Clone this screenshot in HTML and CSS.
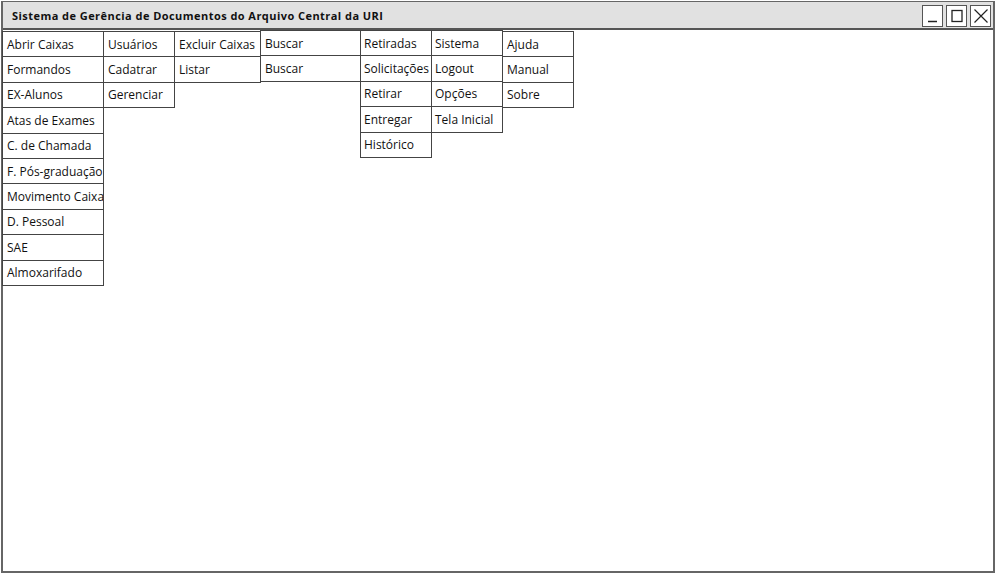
FILE: index.html
```html
<!DOCTYPE html>
<html lang="pt">
<head>
<meta charset="utf-8">
<title>Sistema de Gerência de Documentos</title>
<link rel="stylesheet" href="styles.css">
</head>
<body>
<div class="window">
  <div class="titlebar">
    <span class="title">Sistema de Gerência de Documentos do Arquivo Central da URI</span>
    <div class="controls">
      <span class="ctrl"><svg width="18" height="18" viewBox="0 0 18 18"><path d="M4 14.5 H13" stroke="#222" stroke-width="1.5" fill="none"/></svg></span>
      <span class="ctrl"><svg width="18" height="18" viewBox="0 0 18 18"><rect x="4" y="3.5" width="10" height="11" stroke="#222" stroke-width="1.3" fill="none"/></svg></span>
      <span class="ctrl"><svg width="18" height="18" viewBox="0 0 18 18"><path d="M2.5 2.5 L15.5 15.5 M15.5 2.5 L2.5 15.5" stroke="#222" stroke-width="1.2" fill="none"/></svg></span>
    </div>
  </div>
  <div class="menus">
    <div class="col c1">
      <div class="btn">Abrir Caixas</div>
      <div class="btn">Formandos</div>
      <div class="btn">EX-Alunos</div>
      <div class="btn">Atas de Exames</div>
      <div class="btn">C. de Chamada</div>
      <div class="btn">F. Pós-graduação</div>
      <div class="btn">Movimento Caixa</div>
      <div class="btn">D. Pessoal</div>
      <div class="btn">SAE</div>
      <div class="btn">Almoxarifado</div>
    </div>
    <div class="col c2">
      <div class="btn">Usuários</div>
      <div class="btn">Cadatrar</div>
      <div class="btn">Gerenciar</div>
    </div>
    <div class="col c3">
      <div class="btn">Excluir Caixas</div>
      <div class="btn">Listar</div>
    </div>
    <div class="col c4">
      <div class="btn">Buscar</div>
      <div class="btn">Buscar</div>
    </div>
    <div class="col c5">
      <div class="btn">Retiradas</div>
      <div class="btn">Solicitações</div>
      <div class="btn">Retirar</div>
      <div class="btn">Entregar</div>
      <div class="btn">Histórico</div>
    </div>
    <div class="col c6">
      <div class="btn">Sistema</div>
      <div class="btn">Logout</div>
      <div class="btn">Opções</div>
      <div class="btn">Tela Inicial</div>
    </div>
    <div class="col c7">
      <div class="btn">Ajuda</div>
      <div class="btn">Manual</div>
      <div class="btn">Sobre</div>
    </div>
  </div>
</div>
</body>
</html>
```
FILE: styles.css
```css
html, body {
  margin: 0;
  padding: 0;
  background: #ffffff;
}
body {
  padding: 1px 0 0 1px;
  font-family: "Open Sans", "DejaVu Sans", sans-serif;
  color: #111;
}
.window {
  width: 994px;
  height: 572px;
  box-sizing: border-box;
  border: 2px solid #666;
  border-top: 1px solid #666;
  display: flex;
  flex-direction: column;
  background: #fff;
}
.titlebar {
  height: 26px;
  background: #e1e1e1;
  border-bottom: 2px solid #555;
  display: flex;
  align-items: center;
  justify-content: space-between;
  padding-left: 9px;
  padding-right: 2px;
}
.title {
  font-family: "Open Sans", "DejaVu Sans", sans-serif;
  font-weight: 700;
  font-size: 11px;
  letter-spacing: 0.45px;
}
.controls {
  display: flex;
  gap: 3px;
  padding-top: 1px;
}
.ctrl {
  width: 19px;
  height: 20px;
  border: 1.5px solid #555;
  background: #fff;
  display: flex;
  align-items: center;
  justify-content: center;
}
.menus {
  display: flex;
  align-items: flex-start;
  padding-top: 1px;
  margin-left: -1px;
}
.col {
  display: flex;
  flex-direction: column;
  margin-right: -1px;
  flex: none;
}
.btn {
  box-sizing: border-box;
  height: 26.4px;
  border: 1px solid #444;
  margin-top: -1px;
  background: #fff;
  font-size: 12px;
  padding-left: 4px;
  display: flex;
  align-items: center;
  white-space: nowrap;
  overflow: hidden;
}
.col .btn:first-child { margin-top: 0; }
.c1 { width: 102px; }
.c2 { width: 72px; }
.c3 { width: 87px; }
.c4 { width: 101px; margin-top: -1px; }
.c5 { width: 72px; margin-top: -1px; }
.c6 { width: 72px; margin-top: -1px; }
.c7 { width: 72px; }
.c5 .btn, .c6 .btn { padding-left: 3px; }
```
